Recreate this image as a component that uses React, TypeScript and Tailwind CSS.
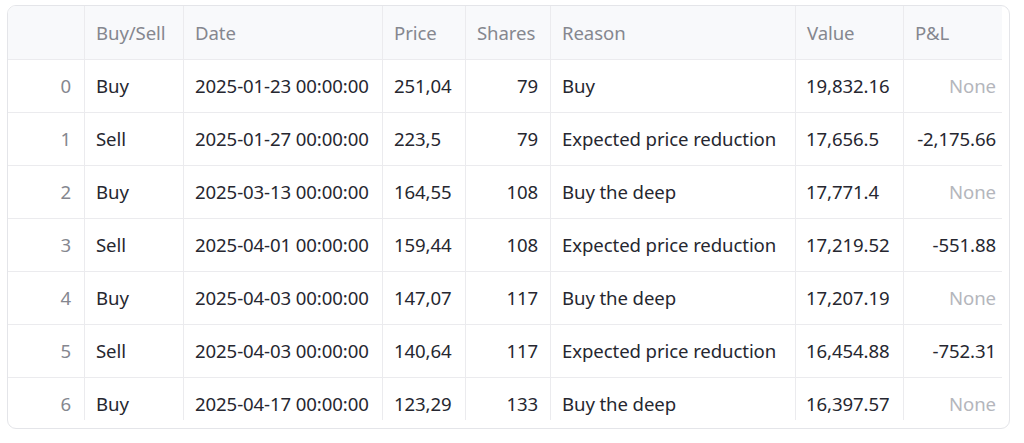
import React from "react";

type Row = {
  side: string;
  date: string;
  price: string;
  shares: string;
  reason: string;
  value: string;
  pnl: string | null;
};

const rows: Row[] = [
  { side: "Buy", date: "2025-01-23 00:00:00", price: "251,04", shares: "79", reason: "Buy", value: "19,832.16", pnl: null },
  { side: "Sell", date: "2025-01-27 00:00:00", price: "223,5", shares: "79", reason: "Expected price reduction", value: "17,656.5", pnl: "-2,175.66" },
  { side: "Buy", date: "2025-03-13 00:00:00", price: "164,55", shares: "108", reason: "Buy the deep", value: "17,771.4", pnl: null },
  { side: "Sell", date: "2025-04-01 00:00:00", price: "159,44", shares: "108", reason: "Expected price reduction", value: "17,219.52", pnl: "-551.88" },
  { side: "Buy", date: "2025-04-03 00:00:00", price: "147,07", shares: "117", reason: "Buy the deep", value: "17,207.19", pnl: null },
  { side: "Sell", date: "2025-04-03 00:00:00", price: "140,64", shares: "117", reason: "Expected price reduction", value: "16,454.88", pnl: "-752.31" },
  { side: "Buy", date: "2025-04-17 00:00:00", price: "123,29", shares: "133", reason: "Buy the deep", value: "16,397.57", pnl: null },
];

const cell = "flex items-center px-[11px] border-r border-[#ebebee] whitespace-nowrap overflow-hidden";

export default function App() {
  return (
    <div
      className="w-[1024px] h-[443px] bg-white pt-[5px] pl-[7px]"
      style={{ fontFamily: '"Noto Sans", sans-serif' }}
    >
      <div className="w-[1003px] h-[424px] border border-[#e4e5e9] rounded-[9px] overflow-hidden bg-white">
        <div className="w-[994px] h-[414px] overflow-hidden text-[18.6px] tracking-[-0.1px]">
          {/* header */}
          <div className="flex h-[54px] bg-[#f8f9fb] border-b border-[#ebebee] text-[#85878f]">
            <div className={`${cell} w-[77px]`}></div>
            <div className={`${cell} w-[99px]`}>Buy/Sell</div>
            <div className={`${cell} w-[199px]`}>Date</div>
            <div className={`${cell} w-[83px]`}>Price</div>
            <div className={`${cell} w-[85px]`}>Shares</div>
            <div className={`${cell} w-[245px]`}>Reason</div>
            <div className={`${cell} w-[108px]`}>Value</div>
            <div className={`${cell} w-[98px] border-r-0`}>P&amp;L</div>
          </div>
          {rows.map((r, i) => (
            <div key={i} className="flex h-[53px] border-b border-[#ebebee] text-[#262730]">
              <div className={`${cell} w-[77px] justify-end pr-[13px] text-[#85878f]`}>{i}</div>
              <div className={`${cell} w-[99px]`}>{r.side}</div>
              <div className={`${cell} w-[199px]`}>{r.date}</div>
              <div className={`${cell} w-[83px]`}>{r.price}</div>
              <div className={`${cell} w-[85px] justify-end pr-[12px]`}>{r.shares}</div>
              <div className={`${cell} w-[245px]`}>{r.reason}</div>
              <div className={`${cell} w-[108px] pl-[10px]`}>{r.value}</div>
              <div className={`${cell} w-[98px] justify-end pr-[6px] pl-[4px] border-r-0 ${r.pnl ? "" : "text-[#b4b6bc]"}`}>
                {r.pnl ?? "None"}
              </div>
            </div>
          ))}
        </div>
      </div>
    </div>
  );
}
